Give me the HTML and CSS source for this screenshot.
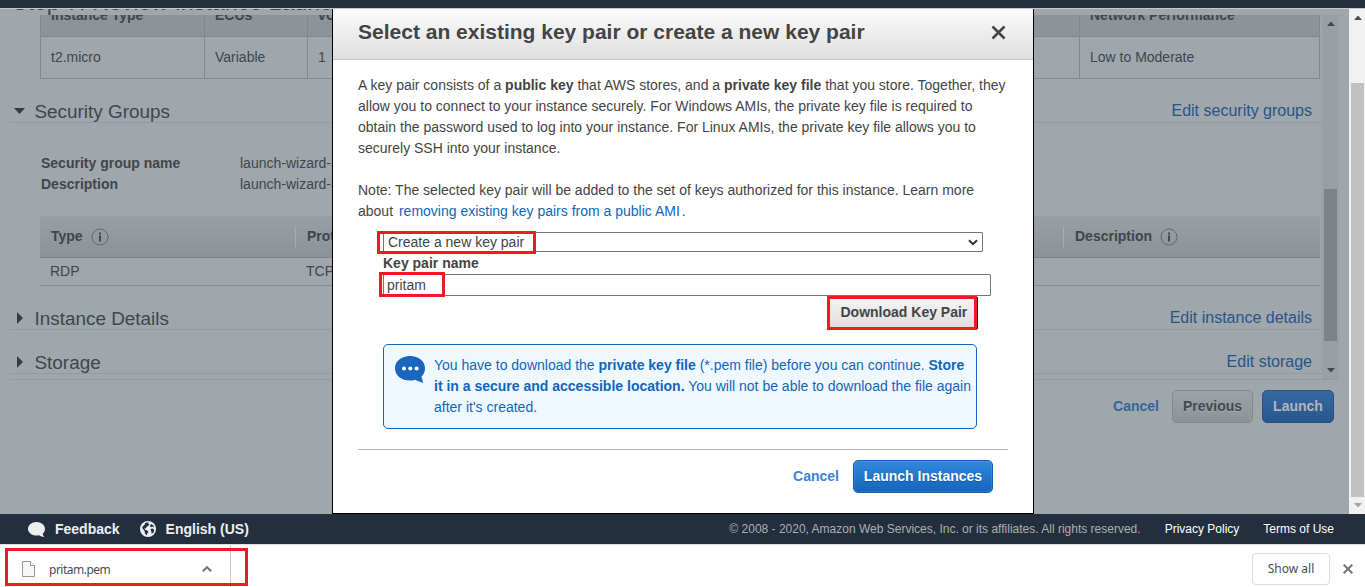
FILE: index.html
```html
<!DOCTYPE html>
<html lang="en">
<head>
<meta charset="utf-8">
<title>Launch instance wizard</title>
<link rel="stylesheet" href="styles.css">
</head>
<body>
<div class="topbar"></div>
<main class="workspace">
  <section class="page">
    <h1 class="page-title">Step 7: Review Instance Launch</h1>
    <div class="review">
      <div class="review-body">
        <div class="itable">
          <div class="icell head">Instance Type</div><div class="icell head">ECUs</div><div class="icell head">vCPUs</div><div class="icell head">Network Performance</div>
          <div class="icell">t2.micro</div><div class="icell">Variable</div><div class="icell">1</div><div class="icell">Low to Moderate</div>
        </div>
        <div class="section sec-groups">
          <svg class="tri" width="12" height="12"><path d="M0 3h11L5.500 9z"/></svg>
          <h2>Security Groups</h2><a class="edit">Edit security groups</a>
        </div>
        <dl class="facts">
          <dt>Security group name</dt><dd>launch-wizard-3</dd>
          <dt>Description</dt><dd>launch-wizard-3</dd>
        </dl>
        <div class="rules">
          <div class="rules-head">
            <div class="rh type">Type <svg class="info" width="18" height="18"><circle cx="9" cy="9" r="8"/><path d="M8 4.500h2v2H8zM8 7.500h2v6H8z"/></svg></div>
            <div class="rh proto">Protocol</div>
            <div class="rh desc">Description <svg class="info" width="18" height="18"><circle cx="9" cy="9" r="8"/><path d="M8 4.500h2v2H8zM8 7.500h2v6H8z"/></svg></div>
          </div>
          <div class="rules-row"><span>RDP</span><span>TCP</span></div>
        </div>
        <div class="section sec-details">
          <svg class="tri" width="12" height="12"><path d="M3 0v12L9 6z"/></svg>
          <h2>Instance Details</h2><a class="edit">Edit instance details</a>
        </div>
        <div class="section sec-storage">
          <svg class="tri" width="12" height="12"><path d="M3 0v12L9 6z"/></svg>
          <h2>Storage</h2><a class="edit">Edit storage</a>
        </div>
      </div>
      <div class="inner-scroll">
        <svg class="arrow" width="8" height="4"><path d="M0 4L3.500 0h1L8 4z"/></svg>
        <div class="thumb"></div>
        <svg class="arrow" width="8" height="4"><path d="M0 0h8L4.500 4h-1z"/></svg>
      </div>
    </div>
    <div class="wizard-actions">
      <a class="cancel">Cancel</a><button class="btn grey">Previous</button><button class="btn blue">Launch</button>
    </div>
  </section>
  <div class="outer-scroll">
    <svg class="arrow dark" width="8" height="4"><path d="M0 4L3.500 0h1L8 4z"/></svg>
    <div class="outer-thumb"></div>
    <svg class="arrow pale" width="8" height="4"><path d="M0 0h8L4.500 4h-1z"/></svg>
  </div>

  <div class="dialog">
    <header class="dialog-head">
      <h2>Select an existing key pair or create a new key pair</h2>
      <svg class="close" width="15" height="15"><path d="M1.500 1.500l12 12M13.500 1.500l-12 12"/></svg>
    </header>
    <div class="dialog-body">
      <p>A key pair consists of a <b>public key</b> that AWS stores, and a <b>private key file</b> that you store. Together, they<br>allow you to connect to your instance securely. For Windows AMIs, the private key file is required to<br>obtain the password used to log into your instance. For Linux AMIs, the private key file allows you to<br>securely SSH into your instance.</p>
      <p>Note: The selected key pair will be added to the set of keys authorized for this instance. Learn more<br>about <a class="learn">removing existing key pairs from a public AMI</a>.</p>
      <div class="form">
        <div class="select"><span>Create a new key pair</span>
          <svg width="10" height="7"><path d="M1 1.200l4 4 4-4"/></svg><i class="mark mark-select"></i></div>
        <label class="name-label">Key pair name</label>
        <div class="field"><span>pritam</span><i class="mark mark-field"></i></div>
        <div class="download-row"><div class="download">Download Key Pair<i class="mark mark-download"></i></div></div>
        <div class="notice">
          <svg width="30" height="28"><path d="M15 0C23.500 0 30 5 30 12.200c0 3.600-1.200 6.300-3.600 8.600L28.200 27l-8.400-3.200C18.300 24.500 16.700 24.600 15 24.600 6.500 24.600 0 19.600 0 12.300S6.500 0 15 0z"/><g fill="#fff"><circle cx="9" cy="12.500" r="2"/><circle cx="15.300" cy="12.500" r="2"/><circle cx="21.600" cy="12.500" r="2"/></g></svg>
          <p>You have to download the <b>private key file</b> (*.pem file) before you can continue. <b>Store</b><br><b>it in a secure and accessible location.</b> You will not be able to download the file again<br>after it's created.</p>
        </div>
      </div>
      <footer class="dialog-actions"><a class="cancel">Cancel</a><button class="btn bright">Launch Instances</button></footer>
    </div>
  </div>
</main>
<footer class="site-footer">
  <svg class="bubble" width="18" height="17"><path d="M8.500 1C13.300 1 17 4 17 7.800c0 2.100-.9 3.700-2.300 4.900.1 1.200.7 2.300 1.600 3.300-2 0-3.800-.5-5-1.700-.9.200-1.800.3-2.800.3C3.700 14.600 0 11.600 0 7.800S3.700 1 8.500 1z"/></svg>
  <b class="feedback">Feedback</b>
  <svg class="globe" width="16" height="16"><circle cx="8" cy="8" r="8" fill="#eee"/><path fill="#232f3e" d="M5.500 1.800L9 1.200l-1 1.500 1.500.8L8 5 6.500 6l-.8 1.500-1.500-.3L5.500 9l1.800.6L8.500 11l-1.300 1.500-.4 2L5 12.500 4.600 10 2.500 7.500 2.300 5.500 4 4.500zM11 3l2.200 1.200 1 2-1.700-.6-1.700.6-.8-1.200zM10.500 8l2-.5 1.800 1.300-.8 2.700-1.700 1.300-.5-2.400z"/></svg>
  <b class="lang">English (US)</b>
  <span class="copyright">© 2008 - 2020, Amazon Web Services, Inc. or its affiliates. All rights reserved.</span>
  <a class="privacy">Privacy Policy</a><a class="terms">Terms of Use</a>
</footer>
<div class="shelf">
  <div class="item">
    <svg class="file" width="13" height="16"><path d="M.5.500h8l4 4v11H.5z" fill="#f7f7f7" stroke="#9a9a9a"/><path d="M8.500.500v4h4" fill="#fff" stroke="#9a9a9a"/></svg>
    <span>pritam.pem</span>
    <svg class="caret" width="10" height="6"><path d="M.8 5.200L5 1.200l4.200 4"/></svg>
    <i class="mark mark-item"></i>
  </div>
  <button class="show-all">Show all</button>
  <svg class="dismiss" width="10" height="10"><path d="M.7.700l8.600 8.600M9.300.700L.7 9.300"/></svg>
</div>
</body>
</html>
```

FILE: styles.css
```css
* { box-sizing: border-box; }
body { margin: 0; height: 587px; overflow: hidden; display: flex; flex-direction: column; background: #fff; color: #444; font: 14px/21px "Liberation Sans", Arial, sans-serif; }
h1, h2, p, dl, dd { margin: 0; font-weight: normal; }
b { font-weight: bold; }
svg { display: block; flex: none; }

.topbar { height: 9px; flex: none; background: #232f3e; border-bottom: 1px solid #c5c7c9; }
.workspace { position: relative; height: 505px; flex: none; display: grid; grid-template-columns: 1fr 16px; }

/* Dimmed wizard page */
.page { background: #9fa6ac; color: #40464b; overflow: hidden; display: flex; flex-direction: column; min-width: 0; }
.page-title { height: 6px; flex: none; overflow: hidden; display: flex; align-items: flex-end; padding-left: 12px; font-size: 23.200px; line-height: 26px; white-space: nowrap; }
.review { display: flex; height: 365px; flex: none; margin: 0 10px; border-bottom: 1px solid #949ba1; overflow: hidden; }
.review-body { flex: 1; min-width: 0; overflow: hidden; }

.itable { display: grid; grid-template-columns: 164px 103px 772px 241px; grid-template-rows: 22px 42px; margin-left: 30px; width: 1280px; }
.icell { border: 1px solid #81888e; border-width: 0 0 1px 1px; padding-left: 10px; display: flex; align-items: center; white-space: nowrap; }
.icell:nth-child(4n) { border-right-width: 1px; }
.icell.head { font-weight: bold; background: #8c9399; line-height: 22px; align-items: flex-end; padding-bottom: 10px; overflow: hidden; }

.section { display: flex; align-items: flex-end; height: 30px; padding: 0 10px 0 4px; border-bottom: 1px solid #949ba1; }
.section h2 { flex: 1; margin-left: 8.500px; font-size: 18.900px; line-height: 20px; }
.section .tri { fill: #363c41; margin-bottom: 5px; }
.section .edit { font-size: 16px; line-height: 21px; color: #285587; padding-bottom: 1px; }
.sec-groups { margin-top: 14px; }
.sec-details { margin-top: 14px; }
.sec-storage { margin-top: 14px; }

.facts { display: grid; grid-template-columns: 199px 1fr; margin: 30px 0 0 31px; }
.facts dt { font-weight: bold; }

.rules { margin: 21px 2px 0 30px; }
.rules-head { display: grid; grid-template-columns: 255px 768px 1fr; height: 42px; align-items: center; background: linear-gradient(#999fa5, #8b9298); border-bottom: 1px solid #7d848a; font-weight: bold; }
.rh { display: flex; align-items: center; height: 20px; padding-left: 11px; gap: 8px; border-left: 1px solid #a5acb2; }
.rh.type { border-left: 0; }
.info circle { fill: none; stroke: #626a71; }
.info path { fill: #43494e; }
.rules-row { display: grid; grid-template-columns: 256px 1fr; height: 28px; border-bottom: 1px solid #858c92; padding: 3px 0 0 10px; }

.inner-scroll { width: 17px; background: #989fa5; display: flex; flex-direction: column; align-items: center; padding: 7px 2px 6px; }
.arrow { fill: #43484d; }
.thumb { width: 13px; height: 152px; margin: 163px 0 27px; background: #7b8389; }

.wizard-actions { display: flex; justify-content: flex-end; align-items: center; padding: 10px 15px 0 0; }
.cancel { font-weight: bold; color: #3884d9; }
.wizard-actions .cancel { color: #346598; margin-right: 13px; }
.btn { height: 33px; border-radius: 5px; border: 1px solid; font: bold 14px/21px "Liberation Sans", Arial, sans-serif; padding: 0; }
.btn.grey { width: 81px; color: #43494e; background: linear-gradient(#9ba2a8, #8c9399); border-color: #81888e; text-shadow: 0 1px #a5acb2; margin-right: 9px; }
.btn.blue { width: 72px; color: #aeb8c2; background: linear-gradient(#356ba2, #28568a); border-color: #28517f; }
.btn.bright { width: 140px; color: #fff; background: linear-gradient(#3188dd, #1464bb); border-color: #1260b3; text-shadow: 0 1px 1px #14539a; box-shadow: inset 0 0 0 1px rgba(255,255,255,.1); }

.outer-scroll { background: #f1f1f1; display: flex; flex-direction: column; align-items: center; padding: 7px 1px 7px 2px; }
.arrow.dark { fill: #505050; }
.arrow.pale { fill: #a3a3a3; }
.outer-thumb { width: 13px; height: 414px; margin: 63px 0 6px; background: #c1c1c1; }

/* Key pair dialog, above the page */
.dialog { position: absolute; left: 332px; top: 0; width: 702px; height: 505px; background: #fff; border: 1px solid #000; border-top: 0; }
.dialog-head { height: 51px; display: flex; justify-content: space-between; padding: 12px 27px 0 25px; background: linear-gradient(#fbfbfb, #dfdfdf); border-bottom: 1px solid #c8c8c8; }
.dialog-head h2 { font-size: 21px; line-height: 22px; font-weight: bold; white-space: nowrap; }
.close { margin-top: 4px; fill: none; stroke: #444; stroke-width: 2.500; }
.dialog-body { padding: 15px 25px 0; white-space: nowrap; }
.dialog-body > p + p { margin-top: 21px; }
.learn { color: #1166bb; margin: 0 2px; }
.form { width: 608px; margin-left: 25px; display: flex; flex-direction: column; padding-top: 10px; }
.select, .field { position: relative; border: 1px solid #767676; border-radius: 1px; display: flex; align-items: center; justify-content: space-between; }
.select { width: 600px; height: 20px; padding: 0 4px; }
.select svg { fill: none; stroke: #333; stroke-width: 2; }
.name-label { font-weight: bold; height: 22px; line-height: 21px; padding-top: 1px; }
.field { height: 22px; padding: 0 3px; }
.download-row { display: flex; justify-content: flex-end; padding-right: 13px; }
.download { position: relative; width: 149px; height: 32px; margin-top: 1px; padding-left: 10.500px; line-height: 29px; font-weight: bold; background: linear-gradient(#f5f5f5, #ddd); border: 1px solid #111; }
.notice { display: flex; width: 594px; height: 85px; margin-top: 15px; border: 1px solid #1166bb; border-radius: 5px; background: #f0f8ff; color: #1166bb; padding: 10px 0 0 11px; }
.notice svg { fill: #1a66bf; margin-top: 1px; }
.notice p { margin-left: 9px; }
.dialog-actions { width: 650px; margin-top: 20px; border-top: 1px solid #b7b7b7; padding: 10px 15px 0 0; display: flex; align-items: center; justify-content: flex-end; gap: 14px; }

/* Red highlight frames */
.mark { position: absolute; border: 3px solid #ed1c24; }
.mark-select { left: -7px; top: -2px; width: 159px; height: 23px; }
.mark-field { left: -5px; top: -3px; width: 66px; height: 25px; }
.mark-download { left: -3px; top: -2px; width: 150px; height: 34px; }
.mark-item { left: 5px; top: 3px; width: 243px; height: 38px; }

.site-footer { height: 30px; flex: none; background: #232f3e; color: #eee; display: flex; align-items: center; padding: 0 31px 0 28px; font-size: 12px; white-space: nowrap; }
.site-footer svg { fill: #eee; }
.site-footer b { font-size: 14px; }
.feedback { margin: 0 20px 0 9px; }
.lang { margin-left: 10px; }
.copyright { margin-left: auto; color: #a9b0b0; }
.privacy, .terms { margin-left: 24px; color: #fff; }

.shelf { height: 43px; flex: none; display: flex; align-items: center; border-top: 1px solid #dcdee2; font: 12px/18px "Noto Sans", sans-serif; color: #4a4d50; padding-right: 12px; }
.item { position: relative; width: 231px; height: 43px; border-right: 1px solid #c8c8c8; display: flex; align-items: center; padding: 5px 18px 0 22px; }
.item span { flex: 1; margin-left: 14px; padding-top: 2px; letter-spacing: -.5px; }
.caret, .dismiss { fill: none; stroke: #757575; stroke-width: 2; }
.show-all { margin-left: auto; width: 78px; height: 32px; margin-top: 5px; background: #fff; border: 1px solid #dadce0; border-radius: 4px; font: inherit; color: inherit; padding: 0; }
.dismiss { margin: 5px 0 0 13px; }
```
